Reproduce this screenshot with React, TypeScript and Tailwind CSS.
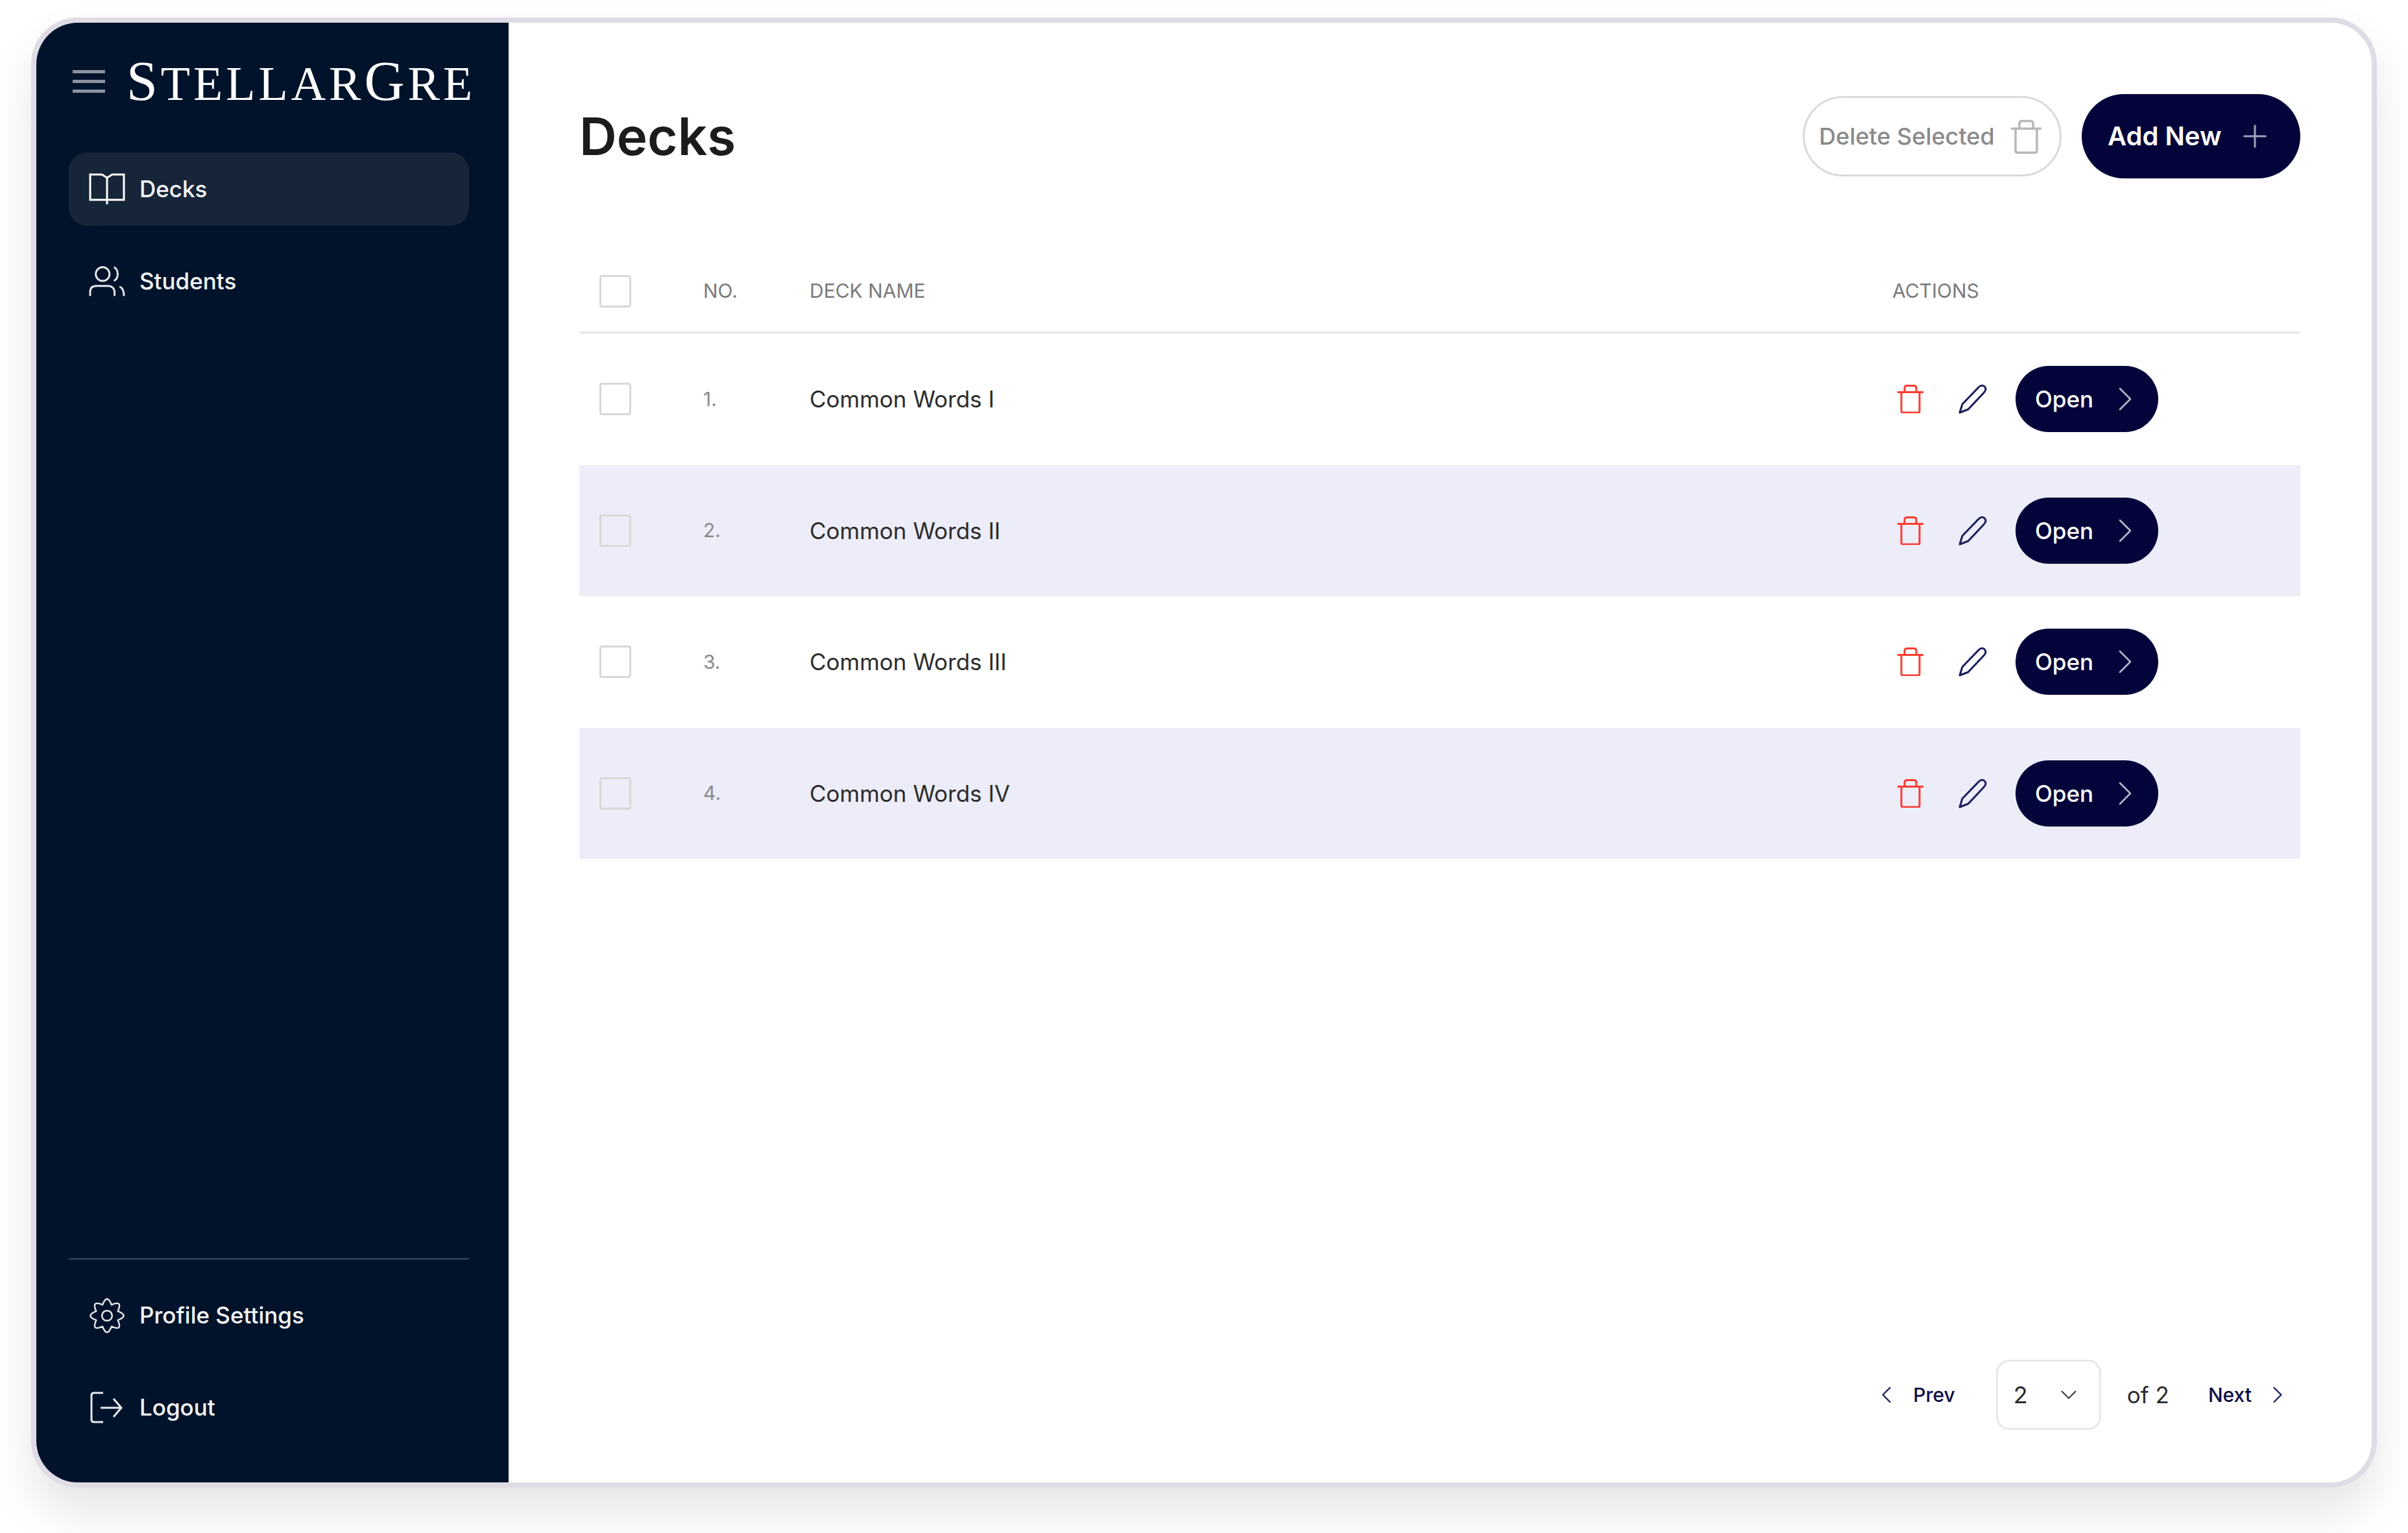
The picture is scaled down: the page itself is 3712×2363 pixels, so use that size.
import React from 'react';
import { ChevronLeft, ChevronRight, ChevronDown, Plus } from 'lucide-react';

const DECKS = ['Common Words I', 'Common Words II', 'Common Words III', 'Common Words IV'];

const gearPath = (() => {
  const cx = 34;
  const cy = 34;
  const pt = (r: number, deg: number) => {
    const a = (deg * Math.PI) / 180;
    return `${(cx + r * Math.cos(a)).toFixed(2)} ${(cy + r * Math.sin(a)).toFixed(2)}`;
  };
  let d = `M${pt(22, -112.5)}`;
  for (let i = 0; i < 8; i++) {
    const tip = -90 + i * 45;
    d += ` Q${pt(42, tip)} ${pt(22, tip + 22.5)}`;
  }
  return d + 'Z';
})();

const BookIcon = () => (
  <svg width="56" height="50" viewBox="0 0 56 50" fill="none" stroke="#fff" strokeWidth="3">
    <path d="M2 2H20L28 7L36 2H54V41H2Z" />
    <path d="M28 7V48" />
  </svg>
);

const UsersIcon = () => (
  <svg width="58" height="50" viewBox="0 0 58 50" fill="none" stroke="#e8eaee" strokeWidth="3">
    <circle cx="22" cy="13" r="11" />
    <path d="M40 2C48 6 48 20 40 24" />
    <path d="M2 48V42C2 34 7 32 12 32H31C36 32 41 35 41 42V48" />
    <path d="M49 33C54 35 56 39 56 48" />
  </svg>
);

const GearIcon = () => (
  <svg width="68" height="68" viewBox="0 0 68 68" fill="none" stroke="#e8eaee" strokeWidth="3" strokeLinejoin="round">
    <path d={gearPath} />
    <circle cx="34" cy="34" r="9.5" />
  </svg>
);

const LogoutIcon = () => (
  <svg width="56" height="50" viewBox="0 0 56 50" fill="none" stroke="#e8eaee" strokeWidth="3">
    <path d="M22 2H8Q4 2 4 6V43Q4 47 8 47H22" />
    <path d="M18 25H50M38 11L50 25L38 39" />
  </svg>
);

const TrashIcon = ({ color, className }: { color: string; className: string }) => (
  <svg className={className} viewBox="0 0 40 44" fill="none" stroke={color} strokeWidth="3">
    <path d="M0 11.5H40" />
    <path d="M11 11V5Q11 1.5 15 1.5H25Q29 1.5 29 5V11" />
    <path d="M6 11V41Q6 43 8 43H32Q34 43 34 41V11" />
  </svg>
);

const PencilIcon = () => (
  <svg width="44" height="46" viewBox="0 0 44 46" fill="none" stroke="#1c1d5e" strokeWidth="3">
    <path d="M2 44L6 31L31 5Q36 0 40.500 4Q44 9 39 13.500L15 39Z" strokeLinejoin="round" />
  </svg>
);

const NavItem = ({ icon, label, active }: { icon: React.ReactNode; label: string; active?: boolean }) => (
  <div className={`flex h-[113px] items-center gap-[22px] rounded-[28px] pl-[31px] ${active ? 'bg-[#172539]' : ''}`}>
    <div className="flex w-[56px] items-center justify-center">{icon}</div>
    <span className="text-[35px] font-medium text-[#f4f5f7]">{label}</span>
  </div>
);

const Checkbox = () => (
  <div className="h-[50px] w-[49px] rounded-[4px] border-[3px] border-[#d8d8d8]" />
);

const App: React.FC = () => {
  return (
    <div className="h-[2363px] w-[3712px] bg-white pl-[48px] pt-[27px] font-['Inter',sans-serif]">
      <div className="flex h-[2266px] w-[3616px] overflow-hidden rounded-[72px] border-[8px] border-[#dfdce6] bg-white shadow-[0_40px_70px_rgba(0,0,0,0.1)]">
        {/* Sidebar */}
        <aside className="flex w-[728px] shrink-0 flex-col bg-[#01132b] pb-[59px] pl-[50px] pr-[61px] pt-[60px]">
          <div className="flex h-[60px] items-center">
            <div className="ml-[6px] flex w-[50px] shrink-0 flex-col gap-[10px]">
              <div className="h-[5px] bg-[#8b919e]" />
              <div className="h-[5px] bg-[#8b919e]" />
              <div className="h-[5px] bg-[#8b919e]" />
            </div>
            <div className="ml-[33px] shrink-0 whitespace-nowrap font-['Liberation_Serif',serif] text-[74px] leading-none tracking-[5px] text-white">
              <span className="text-[86px]">S</span>TELLAR<span className="text-[86px]">G</span>RE
            </div>
          </div>
          <nav className="mt-[80px] flex flex-col gap-[29px]">
            <NavItem icon={<BookIcon />} label="Decks" active />
            <NavItem icon={<UsersIcon />} label="Students" />
          </nav>
          <div className="mt-auto border-t-[3px] border-[#2f3c4f] pt-[29px]">
            <div className="flex flex-col gap-[29px]">
              <NavItem icon={<GearIcon />} label="Profile Settings" />
              <NavItem icon={<LogoutIcon />} label="Logout" />
            </div>
          </div>
        </aside>

        {/* Main */}
        <main className="flex flex-1 flex-col pb-[81px] pl-[109px] pr-[110px] pt-[110px]">
          <div className="flex h-[130px] items-center justify-between">
            <h1 className="text-[80px] font-semibold leading-none text-[#1c1c1c]">Decks</h1>
            <div className="flex items-center gap-[31px]">
              <button className="flex h-[124px] w-[399px] items-center rounded-full border-[3px] border-[#d9d9d9] pl-[22px]">
                <span className="text-[36px] font-medium text-[#8a8a8a]">Delete Selected</span>
                <TrashIcon color="#b8b8b8" className="ml-[25px] h-[53px] w-[47px]" />
              </button>
              <button className="flex h-[130px] w-[337px] items-center rounded-full bg-[#02043a] pl-[40px]">
                <span className="text-[40px] font-semibold text-white">Add New</span>
                <Plus className="ml-[23px] h-[56px] w-[56px] text-[#a0a1bb]" strokeWidth={1.3} />
              </button>
            </div>
          </div>

          <div className="mt-[111px] grid h-[128px] grid-cols-[191px_164px_1669px_1fr] items-center border-b-[3px] border-[#e6e6e6] text-[30px] text-[#7a7a7a]">
            <div className="pl-[31px]">
              <Checkbox />
            </div>
            <span>NO.</span>
            <span>DECK NAME</span>
            <span>ACTIONS</span>
          </div>

          {DECKS.map((name, i) => (
            <div
              key={name}
              className={`grid h-[202.5px] grid-cols-[191px_164px_1669px_1fr] items-center ${i % 2 === 1 ? 'bg-[#ecedf8]' : ''}`}
            >
              <div className="pl-[31px]">
                <Checkbox />
              </div>
              <span className="text-[30px] text-[#8a8a8a]">{i + 1}.</span>
              <span className="text-[35px] text-[#2b2b2b]">{name}</span>
              <div className="flex items-center">
                <TrashIcon color="#ff3b30" className="ml-[8px] h-[44px] w-[40px]" />
                <div className="ml-[54px]">
                  <PencilIcon />
                </div>
                <button className="ml-[44px] flex h-[102px] w-[220px] items-center rounded-full bg-[#02043a] pl-[30px]">
                  <span className="text-[35px] font-medium text-white">Open</span>
                  <ChevronRight className="ml-[17px] h-[64px] w-[64px] text-[#b4b5c8]" strokeWidth={1} />
                </button>
              </div>
            </div>
          ))}

          <div className="mt-auto flex items-center justify-end pr-[13px] text-[30px]">
            <ChevronLeft className="h-[44px] w-[44px] text-[#1c1d5e]" strokeWidth={1.3} />
            <span className="ml-[19px] font-medium text-[#0a0c45]">Prev</span>
            <div className="ml-[63px] flex h-[108px] w-[162px] items-center rounded-[20px] border-[3px] border-[#e8e8e8] pl-[24px]">
              <span className="text-[36px] text-[#2b2b2b]">2</span>
              <ChevronDown className="ml-[42px] h-[42px] w-[42px] text-[#3a3a3a]" strokeWidth={1.15} />
            </div>
            <span className="ml-[40px] text-[35px] text-[#2b2b2b]">of 2</span>
            <span className="ml-[60px] font-medium text-[#0a0c45]">Next</span>
            <ChevronRight className="ml-[18px] h-[44px] w-[44px] text-[#1c1d5e]" strokeWidth={1.3} />
          </div>
        </main>
      </div>
    </div>
  );
};

export default App;
